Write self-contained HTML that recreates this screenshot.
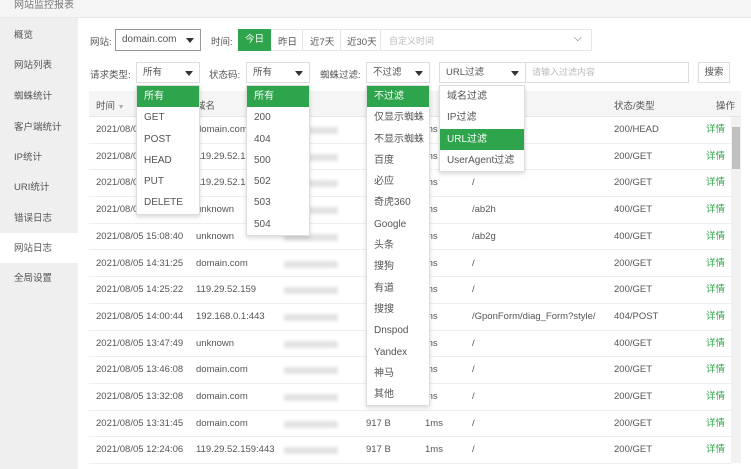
<!DOCTYPE html>
<html><head><meta charset="utf-8"><style>
*{box-sizing:border-box;margin:0;padding:0}
body{width:751px;height:469px;overflow:hidden;background:#fff;font-family:"Liberation Sans","Noto Sans CJK SC",sans-serif;font-size:9.5px;color:#555;position:relative}
.a{position:absolute;white-space:nowrap}
.top{left:0;top:0;width:751px;height:18px;background:#f5f5f5;border-bottom:1px solid #e8e8e8}
.side{left:0;top:18px;width:78px;height:451px;background:#efefef}
.si{left:14px;font-size:9.5px;color:#555}
.sel{border:1px solid #ddd;background:#fff;height:21px;line-height:19px;padding-left:6px;color:#555}
.tri{position:absolute;right:6px;top:8px;width:0;height:0;border-left:4px solid transparent;border-right:4px solid transparent;border-top:5px solid #333}
.dd{background:#fff;border:1px solid #ddd;box-shadow:0 2px 4px rgba(0,0,0,.15)}
.dd div{height:21.3px;line-height:21.3px;padding-left:7px;color:#555;font-size:10px}
.dd .g{background:#2ea44c;color:#fff}
.row{left:89px;width:642px;height:26.7px;border-bottom:1px solid #eee}
.c{position:absolute;top:0;line-height:26px;color:#555}
.blur{position:absolute;top:10px;height:7px;width:54px;background:#e3e3e3;filter:blur(1.5px)}
.gr{color:#2ea44c}
</style></head><body>
<div class="a top"></div>
<div class="a" style="left:14px;top:-4px;font-size:10px;color:#777">网站监控报表</div>
<div class="a side"></div>
<div class="a" style="left:0;top:233px;width:78px;height:30px;background:#fff"></div>
<div class="a si" style="top:27px">概览</div>
<div class="a si" style="top:57px">网站列表</div>
<div class="a si" style="top:88px">蜘蛛统计</div>
<div class="a si" style="top:119px">客户端统计</div>
<div class="a si" style="top:149px">IP统计</div>
<div class="a si" style="top:179px">URI统计</div>
<div class="a si" style="top:210px">错误日志</div>
<div class="a si" style="top:240px">网站日志</div>
<div class="a si" style="top:270px">全局设置</div>

<div class="a" style="left:90px;top:34px">网站:</div>
<div class="a sel" style="left:115px;top:29px;width:86px;height:22px;border-color:#999;font-size:10px;line-height:20px">domain.com<span class="tri"></span></div>
<div class="a" style="left:211px;top:34px">时间:</div>
<div class="a" style="left:238px;top:29px;width:354px;height:22px;border:1px solid #e5e5e5"></div>
<div class="a" style="left:238px;top:29px;width:33px;height:22px;background:#2ea44c;color:#fff;text-align:center;line-height:22px">今日</div>
<div class="a" style="left:278px;top:34px">昨日</div>
<div class="a" style="left:310px;top:34px">近7天</div>
<div class="a" style="left:347px;top:34px">近30天</div>
<div class="a" style="left:302px;top:29px;width:1px;height:22px;background:#e5e5e5"></div>
<div class="a" style="left:340px;top:29px;width:1px;height:22px;background:#e5e5e5"></div>
<div class="a" style="left:380px;top:29px;width:1px;height:22px;background:#e5e5e5"></div>
<div class="a" style="left:389px;top:34px;color:#bbb;font-size:9px">自定义时间</div>
<div class="a" style="left:574px;top:33px;color:#555;font-size:10px">⌵</div>

<div class="a" style="left:90px;top:67px">请求类型:</div>
<div class="a sel" style="left:136px;top:62px;width:64px">所有<span class="tri"></span></div>
<div class="a" style="left:209px;top:67px">状态码:</div>
<div class="a sel" style="left:246px;top:62px;width:64px">所有<span class="tri"></span></div>
<div class="a" style="left:320px;top:67px">蜘蛛过滤:</div>
<div class="a sel" style="left:366px;top:62px;width:64px">不过滤<span class="tri"></span></div>
<div class="a sel" style="left:439px;top:62px;width:87px">URL过滤<span class="tri"></span></div>
<div class="a sel" style="left:525px;top:62px;width:164px;color:#bbb;font-size:9px">请输入过滤内容</div>
<div class="a" style="left:698px;top:62px;width:32px;height:21px;border:1px solid #ddd;text-align:center;line-height:19px">搜索</div>

<div class="a" style="left:89px;top:91px;width:652px;height:26px;background:#f5f5f5;border-bottom:1px solid #e5e5e5"></div>
<div class="a" style="left:96px;top:98px">时间 <span style="color:#aaa;font-size:7px">▼</span></div>
<div class="a" style="left:196px;top:98px">域名</div>
<div class="a" style="left:614px;top:98px">状态/类型</div>
<div class="a" style="left:716px;top:98px">操作</div>
<div class="a" style="left:731px;top:117px;width:10px;height:346px;background:#f1f1f1"></div>
<div class="a" style="left:732px;top:127px;width:8px;height:42px;background:#c1c1c1"></div>

<div class="a" style="left:0;top:117px">
<div class="a row" style="top:0"><span class="c" style="left:7px">2021/08/05 16:52:18</span><span class="c" style="left:107px">domain.com</span><span class="blur" style="left:195px"></span><span class="c" style="left:336px">ms</span><span class="c" style="left:383px">/</span><span class="c" style="left:525px">200/HEAD</span><span class="c gr" style="left:617px">详情</span></div>
<div class="a row" style="top:26.7px"><span class="c" style="left:7px">2021/08/05 16:41:02</span><span class="c" style="left:107px">119.29.52.159</span><span class="blur" style="left:195px"></span><span class="c" style="left:336px">ms</span><span class="c" style="left:383px">/</span><span class="c" style="left:525px">200/GET</span><span class="c gr" style="left:617px">详情</span></div>
<div class="a row" style="top:53.4px"><span class="c" style="left:7px">2021/08/05 16:40:55</span><span class="c" style="left:107px">119.29.52.159</span><span class="blur" style="left:195px"></span><span class="c" style="left:336px">ms</span><span class="c" style="left:383px">/</span><span class="c" style="left:525px">200/GET</span><span class="c gr" style="left:617px">详情</span></div>
<div class="a row" style="top:80.1px"><span class="c" style="left:7px">2021/08/05 15:08:41</span><span class="c" style="left:107px">unknown</span><span class="blur" style="left:195px"></span><span class="c" style="left:336px">ms</span><span class="c" style="left:383px">/ab2h</span><span class="c" style="left:525px">400/GET</span><span class="c gr" style="left:617px">详情</span></div>
<div class="a row" style="top:106.8px"><span class="c" style="left:7px">2021/08/05 15:08:40</span><span class="c" style="left:107px">unknown</span><span class="blur" style="left:195px"></span><span class="c" style="left:336px">ms</span><span class="c" style="left:383px">/ab2g</span><span class="c" style="left:525px">400/GET</span><span class="c gr" style="left:617px">详情</span></div>
<div class="a row" style="top:133.5px"><span class="c" style="left:7px">2021/08/05 14:31:25</span><span class="c" style="left:107px">domain.com</span><span class="blur" style="left:195px"></span><span class="c" style="left:336px">ms</span><span class="c" style="left:383px">/</span><span class="c" style="left:525px">200/GET</span><span class="c gr" style="left:617px">详情</span></div>
<div class="a row" style="top:160.2px"><span class="c" style="left:7px">2021/08/05 14:25:22</span><span class="c" style="left:107px">119.29.52.159</span><span class="blur" style="left:195px"></span><span class="c" style="left:336px">ms</span><span class="c" style="left:383px">/</span><span class="c" style="left:525px">200/GET</span><span class="c gr" style="left:617px">详情</span></div>
<div class="a row" style="top:186.9px"><span class="c" style="left:7px">2021/08/05 14:00:44</span><span class="c" style="left:107px">192.168.0.1:443</span><span class="blur" style="left:195px"></span><span class="c" style="left:336px">ms</span><span class="c" style="left:383px">/GponForm/diag_Form?style/</span><span class="c" style="left:525px">404/POST</span><span class="c gr" style="left:617px">详情</span></div>
<div class="a row" style="top:213.6px"><span class="c" style="left:7px">2021/08/05 13:47:49</span><span class="c" style="left:107px">unknown</span><span class="blur" style="left:195px"></span><span class="c" style="left:336px">ms</span><span class="c" style="left:383px">/</span><span class="c" style="left:525px">400/GET</span><span class="c gr" style="left:617px">详情</span></div>
<div class="a row" style="top:240.3px"><span class="c" style="left:7px">2021/08/05 13:46:08</span><span class="c" style="left:107px">domain.com</span><span class="blur" style="left:195px"></span><span class="c" style="left:336px">ms</span><span class="c" style="left:383px">/</span><span class="c" style="left:525px">200/GET</span><span class="c gr" style="left:617px">详情</span></div>
<div class="a row" style="top:267px"><span class="c" style="left:7px">2021/08/05 13:32:08</span><span class="c" style="left:107px">domain.com</span><span class="blur" style="left:195px"></span><span class="c" style="left:336px">ms</span><span class="c" style="left:383px">/</span><span class="c" style="left:525px">200/GET</span><span class="c gr" style="left:617px">详情</span></div>
<div class="a row" style="top:293.7px"><span class="c" style="left:7px">2021/08/05 13:31:45</span><span class="c" style="left:107px">domain.com</span><span class="blur" style="left:195px"></span><span class="c" style="left:277px">917 B</span><span class="c" style="left:336px">1ms</span><span class="c" style="left:383px">/</span><span class="c" style="left:525px">200/GET</span><span class="c gr" style="left:617px">详情</span></div>
<div class="a row" style="top:320.4px"><span class="c" style="left:7px">2021/08/05 12:24:06</span><span class="c" style="left:107px">119.29.52.159:443</span><span class="blur" style="left:195px"></span><span class="c" style="left:277px">917 B</span><span class="c" style="left:336px">1ms</span><span class="c" style="left:383px">/</span><span class="c" style="left:525px">200/GET</span><span class="c gr" style="left:617px">详情</span></div>
</div>

<div class="a dd" style="left:136px;top:85px;width:64px"><div class="g">所有</div><div>GET</div><div>POST</div><div>HEAD</div><div>PUT</div><div>DELETE</div></div>
<div class="a dd" style="left:246px;top:85px;width:64px"><div class="g">所有</div><div>200</div><div>404</div><div>500</div><div>502</div><div>503</div><div>504</div></div>
<div class="a dd" style="left:366px;top:85px;width:64px"><div class="g">不过滤</div><div>仅显示蜘蛛</div><div>不显示蜘蛛</div><div>百度</div><div>必应</div><div>奇虎360</div><div>Google</div><div>头条</div><div>搜狗</div><div>有道</div><div>搜搜</div><div>Dnspod</div><div>Yandex</div><div>神马</div><div>其他</div></div>
<div class="a dd" style="left:439px;top:85px;width:86px"><div>域名过滤</div><div>IP过滤</div><div class="g">URL过滤</div><div>UserAgent过滤</div></div>
</body></html>
